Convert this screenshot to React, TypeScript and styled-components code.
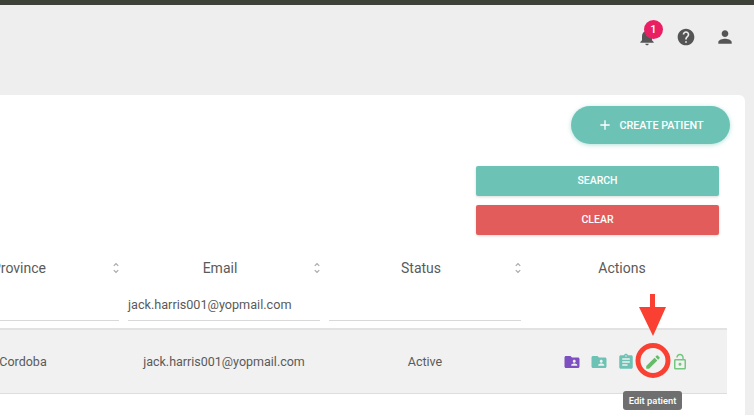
import React from 'react';
import styled, { createGlobalStyle } from 'styled-components';
import {
  MdAdd,
  MdAssignment,
  MdEdit,
  MdFolderShared,
  MdHelp,
  MdLockOpen,
  MdNotifications,
  MdPerson,
  MdUnfoldMore,
} from 'react-icons/md';

const GlobalStyle = createGlobalStyle`
  html, body {
    margin: 0;
    height: 100%;
    overflow: hidden;
    background: #eeeeee;
    font-family: Roboto, "Liberation Sans", sans-serif;
  }
`;

const Page = styled.div`
  position: relative;
  width: 754px;
  height: 415px;
  overflow: hidden;
  background: #eeeeee;
`;

const TopStrip = styled.div`
  height: 5px;
  background: #3e4138;
`;

const AppBar = styled.header`
  height: 90px;
  box-sizing: border-box;
  padding: 20px 17px 0 0;
  display: flex;
  justify-content: flex-end;
  gap: 15px;
`;

const BarIcon = styled.div`
  position: relative;
  width: 24px;
  height: 24px;
  color: #555555;
  font-size: 20px;
  display: flex;
  align-items: center;
  justify-content: center;
`;

const Badge = styled.span`
  position: absolute;
  top: -5px;
  left: 9px;
  width: 19px;
  height: 19px;
  border-radius: 50%;
  background: #e91e63;
  color: #fff;
  font-size: 11px;
  font-weight: 500;
  line-height: 19px;
  text-align: center;
`;

const Card = styled.main`
  width: 826px;
  height: 340px;
  margin-left: -81px;
  box-sizing: border-box;
  padding: 11px 18px 0 8px;
  background: #ffffff;
  border-radius: 6px;
`;

const CreateRow = styled.div`
  display: flex;
  justify-content: flex-end;
`;

const CreateButton = styled.button`
  width: 159px;
  height: 38px;
  margin-right: -3px;
  border: 0;
  border-radius: 19px;
  background: #6cc3b5;
  color: #fff;
  box-shadow: 0 1px 4px rgba(108, 195, 181, 0.5);
  font: 500 10.8px Roboto, sans-serif;
  display: flex;
  align-items: center;
  justify-content: center;
  gap: 6px;
  padding: 0;
  svg {
    font-size: 16px;
  }
`;

const FilterActions = styled.div`
  width: 243px;
  margin: 22px 8px 0 auto;
  display: flex;
  flex-direction: column;
  gap: 9px;
`;

const FilterButton = styled.button<{ $tone: string }>`
  height: 30px;
  padding: 0 0 2px;
  border: 0;
  border-radius: 2px;
  background: ${(p) => p.$tone};
  color: #fff;
  box-shadow: 0 1px 3px rgba(0, 0, 0, 0.15);
  font: 500 10.5px Roboto, sans-serif;
`;

const Columns = styled.div`
  display: grid;
  grid-template-columns: 192px 192px 192px 197px;
  column-gap: 9px;
`;

const HeaderRow = styled(Columns)`
  margin-top: 20px;
  height: 26px;
  align-items: center;
`;

const HeaderCell = styled.div`
  position: relative;
  padding-right: 8px;
  text-align: center;
  font-size: 14px;
  color: #5a5a5a;
  svg {
    position: absolute;
    right: -4px;
    top: 1px;
    color: #aaaaaa;
    font-size: 14px;
  }
`;

const ActionsHeader = styled(HeaderCell)`
  padding-right: 13px;
`;

const FilterRow = styled(Columns)`
  height: 47px;
`;

const FilterField = styled.div`
  height: 40px;
  padding-top: 12px;
  box-sizing: border-box;
  border-bottom: 1px solid #d9d9d9;
  font-size: 12.65px;
  line-height: 24px;
  color: #5a5a5a;
`;

const DataRow = styled(Columns)`
  height: 66px;
  box-sizing: border-box;
  align-items: center;
  background: #f1f1f1;
  border-top: 2px solid #e2e2e2;
  border-bottom: 1px solid #dddddd;
  font-size: 12.5px;
  color: #5a5a5a;
  text-align: center;
`;

const Actions = styled.div`
  display: flex;
  justify-content: center;
  gap: 9px;
  margin-left: -5px;
`;

const ActionIcon = styled.span<{ $tone: string }>`
  width: 18px;
  height: 18px;
  font-size: 18px;
  color: ${(p) => p.$tone};
  display: flex;
  align-items: center;
  justify-content: center;
`;

const Annotation = styled.svg`
  position: absolute;
  left: 630px;
  top: 290px;
`;

const Tooltip = styled.div`
  position: absolute;
  left: 623px;
  top: 391px;
  width: 59px;
  height: 19px;
  border-radius: 3px;
  background: #6f6f6f;
  color: #fff;
  font-size: 9.4px;
  font-weight: 500;
  line-height: 19px;
  text-align: center;
`;

const App = () => {
  return (
    <Page>
      <GlobalStyle />
      <TopStrip />
      <AppBar>
        <BarIcon>
          <MdNotifications />
          <Badge>1</Badge>
        </BarIcon>
        <BarIcon>
          <MdHelp />
        </BarIcon>
        <BarIcon>
          <MdPerson />
        </BarIcon>
      </AppBar>
      <Card>
        <CreateRow>
          <CreateButton>
            <MdAdd />
            CREATE PATIENT
          </CreateButton>
        </CreateRow>
        <FilterActions>
          <FilterButton $tone="#6cc3b5">SEARCH</FilterButton>
          <FilterButton $tone="#e25c5c">CLEAR</FilterButton>
        </FilterActions>
        <HeaderRow>
          <HeaderCell>Province<MdUnfoldMore /></HeaderCell>
          <HeaderCell>Email<MdUnfoldMore /></HeaderCell>
          <HeaderCell>Status<MdUnfoldMore /></HeaderCell>
          <ActionsHeader>Actions</ActionsHeader>
        </HeaderRow>
        <FilterRow>
          <FilterField />
          <FilterField>jack.harris001@yopmail.com</FilterField>
          <FilterField />
        </FilterRow>
        <DataRow>
          <div>Cordoba</div>
          <div>jack.harris001@yopmail.com</div>
          <div>Active</div>
          <Actions>
            <ActionIcon $tone="#7e4fc0"><MdFolderShared /></ActionIcon>
            <ActionIcon $tone="#6cc3b5"><MdFolderShared /></ActionIcon>
            <ActionIcon $tone="#6cc3b5"><MdAssignment /></ActionIcon>
            <ActionIcon $tone="#66bb6a"><MdEdit /></ActionIcon>
            <ActionIcon $tone="#74c77f"><MdLockOpen /></ActionIcon>
          </Actions>
        </DataRow>
      </Card>
      <Annotation width="50" height="92" viewBox="0 0 50 92">
        <path d="M20 4h5v13h11L23 46 9 17h11z" fill="#fa4032" />
        <circle cx="23" cy="70.500" r="15" fill="none" stroke="#fa4032" strokeWidth="5" />
      </Annotation>
      <Tooltip>Edit patient</Tooltip>
    </Page>
  );
};

export default App;
